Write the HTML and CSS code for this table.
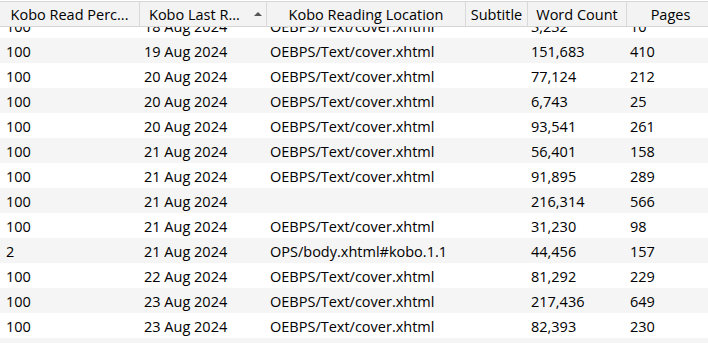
FILE: index.html
```html
<!DOCTYPE html>
<html>
<head>
<meta charset="utf-8">
<link rel="stylesheet" href="styles.css">
</head>
<body>
<div class="table">
  <div class="header">
    <div class="hcell c1">Kobo Read Perc...</div>
    <div class="hcell c2"><span>Kobo Last R...</span><span class="sort"></span></div>
    <div class="hcell c3">Kobo Reading Location</div>
    <div class="hcell c4">Subtitle</div>
    <div class="hcell c5">Word Count</div>
    <div class="hcell c6">Pages</div>
  </div>
  <div class="rows">
    <div class="row clipped"><div class="inner">
      <div class="cell c1">100</div><div class="cell c2">18 Aug 2024</div><div class="cell c3">OEBPS/Text/cover.xhtml</div><div class="cell c4"></div><div class="cell c5">3,232</div><div class="cell c6">10</div>
    </div></div>
    <div class="row alt"><div class="cell c1">100</div><div class="cell c2">19 Aug 2024</div><div class="cell c3">OEBPS/Text/cover.xhtml</div><div class="cell c4"></div><div class="cell c5">151,683</div><div class="cell c6">410</div></div>
    <div class="row"><div class="cell c1">100</div><div class="cell c2">20 Aug 2024</div><div class="cell c3">OEBPS/Text/cover.xhtml</div><div class="cell c4"></div><div class="cell c5">77,124</div><div class="cell c6">212</div></div>
    <div class="row alt"><div class="cell c1">100</div><div class="cell c2">20 Aug 2024</div><div class="cell c3">OEBPS/Text/cover.xhtml</div><div class="cell c4"></div><div class="cell c5">6,743</div><div class="cell c6">25</div></div>
    <div class="row"><div class="cell c1">100</div><div class="cell c2">20 Aug 2024</div><div class="cell c3">OEBPS/Text/cover.xhtml</div><div class="cell c4"></div><div class="cell c5">93,541</div><div class="cell c6">261</div></div>
    <div class="row alt"><div class="cell c1">100</div><div class="cell c2">21 Aug 2024</div><div class="cell c3">OEBPS/Text/cover.xhtml</div><div class="cell c4"></div><div class="cell c5">56,401</div><div class="cell c6">158</div></div>
    <div class="row"><div class="cell c1">100</div><div class="cell c2">21 Aug 2024</div><div class="cell c3">OEBPS/Text/cover.xhtml</div><div class="cell c4"></div><div class="cell c5">91,895</div><div class="cell c6">289</div></div>
    <div class="row alt"><div class="cell c1">100</div><div class="cell c2">21 Aug 2024</div><div class="cell c3"></div><div class="cell c4"></div><div class="cell c5">216,314</div><div class="cell c6">566</div></div>
    <div class="row"><div class="cell c1">100</div><div class="cell c2">21 Aug 2024</div><div class="cell c3">OEBPS/Text/cover.xhtml</div><div class="cell c4"></div><div class="cell c5">31,230</div><div class="cell c6">98</div></div>
    <div class="row alt"><div class="cell c1">2</div><div class="cell c2">21 Aug 2024</div><div class="cell c3">OPS/body.xhtml#kobo.1.1</div><div class="cell c4"></div><div class="cell c5">44,456</div><div class="cell c6">157</div></div>
    <div class="row"><div class="cell c1">100</div><div class="cell c2">22 Aug 2024</div><div class="cell c3">OEBPS/Text/cover.xhtml</div><div class="cell c4"></div><div class="cell c5">81,292</div><div class="cell c6">229</div></div>
    <div class="row alt"><div class="cell c1">100</div><div class="cell c2">23 Aug 2024</div><div class="cell c3">OEBPS/Text/cover.xhtml</div><div class="cell c4"></div><div class="cell c5">217,436</div><div class="cell c6">649</div></div>
    <div class="row"><div class="cell c1">100</div><div class="cell c2">23 Aug 2024</div><div class="cell c3">OEBPS/Text/cover.xhtml</div><div class="cell c4"></div><div class="cell c5">82,393</div><div class="cell c6">230</div></div>
    <div class="row alt"><div class="cell c1"></div><div class="cell c2"></div><div class="cell c3"></div><div class="cell c4"></div><div class="cell c5"></div><div class="cell c6"></div></div>
  </div>
</div>
</body>
</html>
```

FILE: styles.css
```css
html, body {
  margin: 0;
  padding: 0;
  background: #ffffff;
}
body {
  font-family: "Open Sans", "Noto Sans", sans-serif;
  font-size: 14.5px;
  color: #000;
  width: 708px;
  height: 343px;
  overflow: hidden;
}
.table {
  display: flex;
  flex-direction: column;
  height: 343px;
  overflow: hidden;
}
.header {
  display: flex;
  height: 26px;
  box-sizing: border-box;
  margin-top: 1px;
  border-top: 1px solid #d6d6d6;
  border-bottom: 1px solid #d6d6d6;
  background: #f3f3f3;
  flex-shrink: 0;
}
.hcell {
  box-sizing: border-box;
  border-right: 1px solid #d9d9d9;
  display: flex;
  align-items: center;
  justify-content: center;
  white-space: nowrap;
  overflow: hidden;
  position: relative;
}
.hcell.c2 {
  justify-content: flex-start;
  padding-left: 9px;
}
.sort {
  position: absolute;
  left: 114px;
  top: 10px;
  width: 0;
  height: 0;
  border-left: 4px solid transparent;
  border-right: 4px solid transparent;
  border-bottom: 4px solid #555;
}
.c1 { width: 140px; flex-shrink: 0; }
.c2 { width: 127px; flex-shrink: 0; }
.c3 { width: 199px; flex-shrink: 0; }
.c4 { width: 62px; flex-shrink: 0; }
.c5 { width: 99px; flex-shrink: 0; }
.c6 { flex: 1; }
.hcell.c6 { border-right: none; padding-left: 6px; }
.rows {
  display: flex;
  flex-direction: column;
}
.row {
  display: flex;
  height: 25px;
  box-sizing: border-box;
  padding-top: 2px;
  align-items: center;
  flex-shrink: 0;
}
.row.alt { background: #f5f5f5; }
.row.clipped {
  height: 11px;
  padding-top: 0;
  overflow: hidden;
  align-items: flex-end;
}
.row.clipped .inner {
  display: flex;
  height: 25px;
  box-sizing: border-box;
  padding-top: 2px;
  width: 100%;
  align-items: center;
  flex-shrink: 0;
}
.cell {
  box-sizing: border-box;
  padding-left: 4px;
  white-space: nowrap;
  overflow: hidden;
}
.cell.c1 { padding-left: 6px; }
.cell.c3 { padding-left: 3px; }
.cell.c5 { padding-left: 3px; }
.cell.c6 { padding-left: 3px; }
```
